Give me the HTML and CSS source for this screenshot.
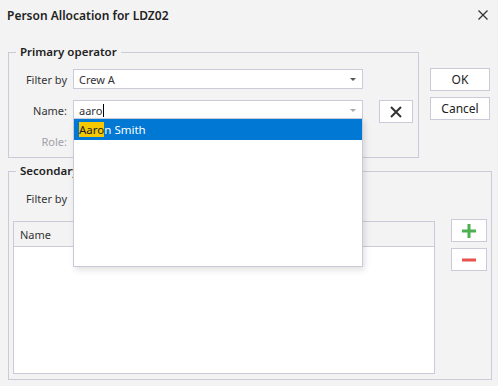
FILE: index.html
```html
<!DOCTYPE html>
<html lang="en">
<head>
  <meta charset="UTF-8" />
  <title>Person Allocation for LDZ02</title>
  <link rel="stylesheet" href="styles.css">
</head>
<body>
  <div class="dialog">
    <div class="titlebar">
      <span class="title">Person Allocation for LDZ02</span>
      <svg class="close" width="10" height="10" viewBox="0 0 10 10">
        <path d="M0.5 0.5 L9.5 9.5 M9.5 0.5 L0.5 9.5" stroke="#333" stroke-width="1.3" fill="none"/>
      </svg>
    </div>

    <div class="main">
      <div class="top-row">
        <fieldset class="group primary">
          <legend>Primary operator</legend>
          <div class="form-grid">
            <label>Filter by</label>
            <div class="combo">
              <span>Crew A</span>
              <span class="arrow"></span>
            </div>
            <span></span>

            <label>Name:</label>
            <div class="combo editing">
              <span>aaro<span class="caret"></span></span>
              <span class="arrow light"></span>
            </div>
            <button class="clear-btn">
              <svg width="12" height="12" viewBox="0 0 12 12">
                <path d="M1 1 L11 11 M11 1 L1 11" stroke="#333" stroke-width="2" fill="none"/>
              </svg>
            </button>

            <label class="muted">Role:</label>
            <div></div>
            <span></span>
          </div>
        </fieldset>

        <div class="actions">
          <button class="btn">OK</button>
          <button class="btn">Cancel</button>
        </div>
      </div>

      <fieldset class="group secondary">
        <legend>Secondary operators</legend>
        <div class="form-grid single">
          <label>Filter by</label>
          <div class="combo">
            <span>All</span>
            <span class="arrow"></span>
          </div>
        </div>
        <div class="list-row">
          <div class="table">
            <div class="table-head">Name</div>
            <div class="table-body"></div>
          </div>
          <div class="list-actions">
            <button class="icon-btn">
              <svg width="14" height="14" viewBox="0 0 14 14">
                <path d="M7 0 V14 M0 7 H14" stroke="#4caf50" stroke-width="3" fill="none"/>
              </svg>
            </button>
            <button class="icon-btn">
              <svg width="14" height="4" viewBox="0 0 14 4">
                <path d="M0 2 H14" stroke="#e8534e" stroke-width="3" fill="none"/>
              </svg>
            </button>
          </div>
        </div>
      </fieldset>
    </div>

    <div class="popup">
      <div class="popup-item selected"><mark>Aaro</mark>n Smith</div>
    </div>
  </div>
</body>
</html>
```

FILE: styles.css
```css
body {
  margin: 0;
  background: #f3f3f3;
  font-family: "Noto Sans", "Open Sans", Arial, sans-serif;
  font-size: 11px;
  color: #333;
}

.dialog {
  position: relative;
  width: 498px;
  height: 386px;
}

.titlebar {
  height: 30px;
  display: flex;
  align-items: center;
  justify-content: space-between;
  padding: 0 10px 0 7px;
}

.title {
  font-size: 12px;
  font-weight: 600;
  color: #222;
}

.main {
  padding: 14px 7px 0 8px;
}

.top-row {
  display: flex;
  align-items: flex-start;
}

.group {
  margin: 0;
  border: 1px solid #cbcad8;
  padding: 0;
  min-width: 0;
  box-sizing: border-box;
}

.group legend {
  font-size: 11.5px;
  font-weight: 600;
  color: #222;
  line-height: 16px;
  padding: 0 4px;
  margin-left: 7px;
}

.primary {
  width: 411px;
  height: 114px;
}

.form-grid {
  display: grid;
  grid-template-columns: 58px 290px 33px;
  grid-auto-rows: 20px;
  column-gap: 6px;
  row-gap: 11px;
  padding-top: 9px;
  align-items: center;
}

.form-grid.single {
  grid-template-columns: 58px 290px;
  padding-top: 9px;
}

.form-grid label {
  text-align: right;
  color: #333;
}

.form-grid label.muted {
  color: #a0a0a8;
}

.combo {
  height: 20px;
  box-sizing: border-box;
  border: 1px solid #cbcad8;
  background: #fff;
  display: flex;
  align-items: center;
  justify-content: space-between;
  padding: 0 6px 0 5px;
}

.arrow {
  width: 0;
  height: 0;
  border-left: 3px solid transparent;
  border-right: 3px solid transparent;
  border-top: 3px solid #555;
}

.arrow.light {
  border-top-color: #aaa;
}

.caret {
  display: inline-block;
  width: 1px;
  height: 13px;
  background: #000;
  vertical-align: -2px;
  margin-left: 1px;
}

.clear-btn {
  align-self: start;
  margin-left: 10px;
  width: 34px;
  height: 23px;
  border: 1px solid #cbcad8;
  background: #fff;
  padding: 0;
  display: flex;
  align-items: center;
  justify-content: center;
}

.actions {
  display: flex;
  flex-direction: column;
  gap: 6px;
  margin-left: 11px;
  margin-top: 24px;
}

.btn {
  width: 60px;
  height: 23px;
  border: 1px solid #cbcad8;
  background: #fff;
  font: inherit;
  font-size: 12px;
  color: #222;
  padding: 0;
}

.secondary {
  margin-top: 5px;
  width: 484px;
  height: 217px;
}

.list-row {
  display: flex;
  align-items: flex-start;
  padding: 13px 0 0 4px;
}

.table {
  width: 422px;
  height: 153px;
  box-sizing: border-box;
  border: 1px solid #cbcad8;
  display: flex;
  flex-direction: column;
}

.table-head {
  height: 25px;
  box-sizing: border-box;
  border-bottom: 1px solid #cbcad8;
  padding-left: 6px;
  display: flex;
  align-items: center;
  color: #333;
}

.table-body {
  flex: 1;
  background: #fff;
}

.list-actions {
  display: flex;
  flex-direction: column;
  gap: 6px;
  margin-left: 16px;
  margin-top: -2px;
}

.icon-btn {
  width: 36px;
  height: 23px;
  border: 1px solid #cbcad8;
  background: #fff;
  padding: 0;
  display: flex;
  align-items: center;
  justify-content: center;
}

.popup {
  position: absolute;
  left: 73px;
  top: 118px;
  width: 290px;
  height: 149px;
  box-sizing: border-box;
  border: 1px solid #cbcad8;
  background: #fff;
  box-shadow: 2px 3px 6px rgba(0, 0, 0, 0.12);
}

.popup-item {
  height: 21px;
  display: flex;
  align-items: center;
  padding-left: 5px;
  font-size: 11.5px;
}

.popup-item.selected {
  background: #0078d4;
  color: #fff;
}

.popup-item mark {
  background: #f5c800;
  color: #222;
}
```
